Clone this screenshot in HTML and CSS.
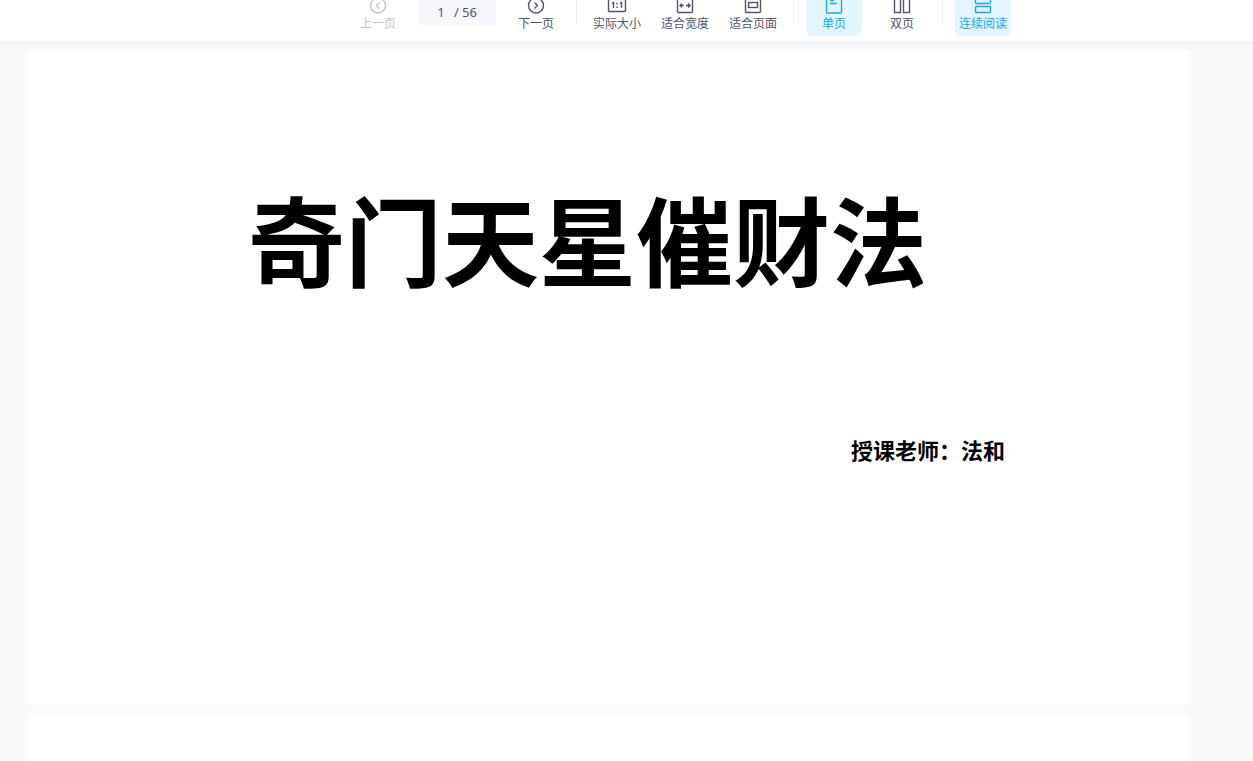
FILE: index.html
```html
<!DOCTYPE html>
<html lang="zh">
<head>
    <meta charset="UTF-8">
    <meta name="viewport" content="width=device-width, initial-scale=1.0">
    <title>奇门天星催财法</title>
    <link rel="stylesheet" href="styles.css">
</head>
<body>
<header class="toolbar">
    <button class="tool" type="button" disabled>
        <svg class="icon" viewBox="0 0 20 20"><circle cx="10" cy="10.5" r="7.5"/><path d="M11.500 7.500l-3 3 3 3"/></svg>
        <span>上一页</span>
    </button>
    <div class="pager">
        <input class="pager-input" type="text" value="1" aria-label="页码">
        <span>/ 56</span>
    </div>
    <button class="tool" type="button">
        <svg class="icon" viewBox="0 0 20 20"><circle cx="10" cy="10.5" r="7.5"/><path d="M8.500 7.500l3 3-3 3"/></svg>
        <span>下一页</span>
    </button>
    <span class="divider"></span>
    <button class="tool" type="button">
        <svg class="icon" viewBox="0 0 20 20"><rect x="1.5" y="2.5" width="17" height="14" rx="1"/><path d="M5 8.500l1.500-1V13M13 8.500l1.500-1V13M10 8v1.500M10 11.500V13"/></svg>
        <span>实际大小</span>
    </button>
    <button class="tool" type="button">
        <svg class="icon" viewBox="0 0 20 20"><rect x="2.5" y="2.5" width="15" height="15" rx="1"/><path d="M9 10.500H5M7 8.500l-2 2 2 2M11 10.500h4M13 8.500l2 2-2 2"/></svg>
        <span>适合宽度</span>
    </button>
    <button class="tool" type="button">
        <svg class="icon" viewBox="0 0 20 20"><rect x="2.5" y="2.5" width="15" height="15" rx="1"/><rect x="5.5" y="7.5" width="9" height="5"/></svg>
        <span>适合页面</span>
    </button>
    <span class="divider"></span>
    <button class="tool active" type="button">
        <svg class="icon" viewBox="0 0 20 20"><rect x="2.5" y="2.5" width="15" height="15.5" rx="1"/><path d="M6 5.500h4M6 8.500h7"/></svg>
        <span>单页</span>
    </button>
    <button class="tool" type="button">
        <svg class="icon" viewBox="0 0 20 20"><rect x="2.5" y="2.5" width="6" height="15"/><rect x="11.5" y="2.5" width="6" height="15"/></svg>
        <span>双页</span>
    </button>
    <span class="divider"></span>
    <button class="tool active" type="button">
        <svg class="icon" viewBox="0 0 20 20"><rect x="2.5" y="2.5" width="15" height="6" rx="1"/><rect x="2.5" y="11.5" width="15" height="6" rx="1"/></svg>
        <span>连续阅读</span>
    </button>
</header>

<main class="viewer">
    <section class="page">
        <h1>奇门天星催财法</h1>
        <p class="teacher">授课老师：法和</p>
    </section>
    <section class="page"></section>
</main>
</body>
</html>
```
FILE: styles.css
```css
* {
    box-sizing: border-box;
}

body {
    margin: 0;
    height: 100vh;
    display: flex;
    flex-direction: column;
    overflow: hidden;
    background-color: #f8fafc;
    color: #50546a;
    font-family: "Noto Sans", "Noto Sans CJK SC", sans-serif;
}

/* 顶部工具栏，内容贴底对齐 */
.toolbar {
    flex: none;
    height: 41px;
    padding: 0 0 5px 108px;
    display: flex;
    justify-content: center;
    align-items: flex-end;
    gap: 12px;
    overflow: hidden;
    background-color: #fff;
}

.tool {
    flex: none;
    width: 56px;
    height: 52px;
    padding: 0 0 5px;
    display: flex;
    flex-direction: column;
    justify-content: flex-end;
    align-items: center;
    border: none;
    border-radius: 6px;
    background: none;
    color: inherit;
    font-family: "Noto Sans CJK SC", sans-serif;
    font-size: 12px;
    line-height: 16px;
    white-space: nowrap;
    cursor: pointer;
}

.tool:disabled {
    color: #c3c3c6;
    cursor: default;
}

.tool.active {
    background-color: #e3f5fe;
    color: #14a8f5;
}

.icon {
    width: 20px;
    height: 20px;
    fill: none;
    stroke: currentColor;
    stroke-width: 1.4;
}

.pager {
    flex: none;
    width: 78px;
    height: 32px;
    margin-bottom: 10px;
    padding: 4px 19px 0 16px;
    display: flex;
    align-items: center;
    justify-content: space-between;
    border-radius: 4px;
    background-color: #f6f8fe;
    font-size: 13px;
}

.pager-input {
    width: 14px;
    padding: 0;
    border: none;
    background: none;
    color: inherit;
    font: inherit;
    text-align: center;
}

.divider {
    flex: none;
    width: 1px;
    height: 28px;
    margin-bottom: 12px;
    background-color: #ebeef2;
}

/* 文档区域 */
.viewer {
    flex: 1;
    min-height: 0;
    padding: 10px 63px 0 28px;
    display: flex;
    flex-direction: column;
    gap: 10px;
    overflow: hidden;
    background-image: linear-gradient(#f3f4f8, #f8fafc 10px);
}

.page {
    flex: none;
    aspect-ratio: 1162 / 654;
    border-radius: 2px;
    background-color: #fff;
    color: #000;
    font-family: "Noto Sans CJK SC", sans-serif;
    font-weight: bold;
}

.page h1 {
    margin: 0;
    padding: 126px 0 0 220px;
    font-size: 97px;
    line-height: 120px;
    white-space: nowrap;
}

.teacher {
    margin: 0;
    padding: 136px 185px 0 0;
    font-size: 22px;
    line-height: 32px;
    text-align: right;
}
```
